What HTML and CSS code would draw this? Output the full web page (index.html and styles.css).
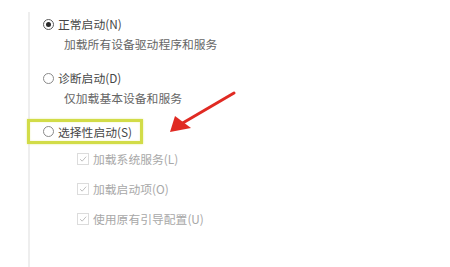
FILE: index.html
```html
<!DOCTYPE html>
<html lang="zh-CN">
<head>
<meta charset="utf-8">
<link rel="stylesheet" href="styles.css">
</head>
<body>
<div class="panel">
  <div class="opt first">
    <span class="radio checked"></span>
    <span class="title">正常启动(N)</span>
  </div>
  <div class="sub">加载所有设备驱动程序和服务</div>

  <div class="opt second">
    <span class="radio"></span>
    <span class="title">诊断启动(D)</span>
  </div>
  <div class="sub">仅加载基本设备和服务</div>

  <div class="highlight">
    <div class="opt">
      <span class="radio"></span>
      <span class="title">选择性启动(S)</span>
    </div>
  </div>

  <div class="checks">
    <div class="check"><span class="box"><svg viewBox="0 0 12 12" width="12" height="12"><path d="M2.5 6.2 L5 8.6 L9.8 3.2" fill="none" stroke="#b9b9b9" stroke-width="1.1"/></svg></span><span class="ctext">加载系统服务(L)</span></div>
    <div class="check"><span class="box"><svg viewBox="0 0 12 12" width="12" height="12"><path d="M2.5 6.2 L5 8.6 L9.8 3.2" fill="none" stroke="#b9b9b9" stroke-width="1.1"/></svg></span><span class="ctext">加载启动项(O)</span></div>
    <div class="check"><span class="box"><svg viewBox="0 0 12 12" width="12" height="12"><path d="M2.5 6.2 L5 8.6 L9.8 3.2" fill="none" stroke="#b9b9b9" stroke-width="1.1"/></svg></span><span class="ctext">使用原有引导配置(U)</span></div>
  </div>
</div>

<svg class="arrow" width="450" height="267" viewBox="0 0 450 267">
  <defs>
    <filter id="soft" x="-20%" y="-20%" width="140%" height="140%">
      <feGaussianBlur stdDeviation="0.7"/>
    </filter>
  </defs>
  <g filter="url(#soft)">
    <line x1="234" y1="93" x2="181" y2="124" stroke="#e02a24" stroke-width="3" stroke-linecap="round"/>
    <polygon points="170,132 175,116 191,128" fill="#e02a24"/>
  </g>
</svg>
</body>
</html>
```

FILE: styles.css
```css
html, body {
  margin: 0;
  padding: 0;
  background: #ffffff;
}

body {
  width: 450px;
  height: 267px;
  overflow: hidden;
  position: relative;
  font-family: "Noto Sans CJK SC", "Noto Sans", sans-serif;
  font-size: 11.8px;
}

.panel {
  margin: 12px 0 0 28px;
  height: 255px;
  border-left: 2px solid #eeeeee;
  padding-top: 2px;
  box-sizing: border-box;
}

.opt {
  display: flex;
  align-items: center;
  height: 20px;
  padding-left: 13px;
}

.second {
  margin-top: 14px;
}

.radio {
  width: 11px;
  height: 11px;
  box-sizing: border-box;
  border: 1px solid #8a8a8a;
  border-radius: 50%;
  background: #fff;
  display: flex;
  align-items: center;
  justify-content: center;
  flex: none;
}

.radio.checked {
  border-color: #5a5a5a;
}

.radio.checked::after {
  content: "";
  width: 5px;
  height: 5px;
  border-radius: 50%;
  background: #2a2a2a;
}

.title {
  margin-left: 4px;
  color: #474747;
  line-height: 20px;
}

.sub {
  height: 20px;
  line-height: 20px;
  padding-left: 34px;
  color: #666666;
}

.highlight {
  margin: 11px 0 0 -3px;
  width: 116px;
  height: 25px;
  box-sizing: border-box;
  border: 3px solid #d2dc48;
  box-shadow: 0 0 2px #e4eb9a, inset 0 0 2px #eef2b8;
  display: flex;
  align-items: center;
}

.highlight .opt {
  height: 19px;
}

.checks {
  padding-left: 47px;
}

.check {
  display: flex;
  align-items: center;
  height: 30px;
}

.box {
  width: 12px;
  height: 12px;
  box-sizing: border-box;
  border: 1px solid #dcdcdc;
  display: flex;
  align-items: center;
  justify-content: center;
  flex: none;
}

.box svg {
  display: block;
}

.ctext {
  margin-left: 4px;
  color: #a8a8a8;
  line-height: 20px;
}

.arrow {
  position: absolute;
  left: 0;
  top: 0;
  pointer-events: none;
}
```
